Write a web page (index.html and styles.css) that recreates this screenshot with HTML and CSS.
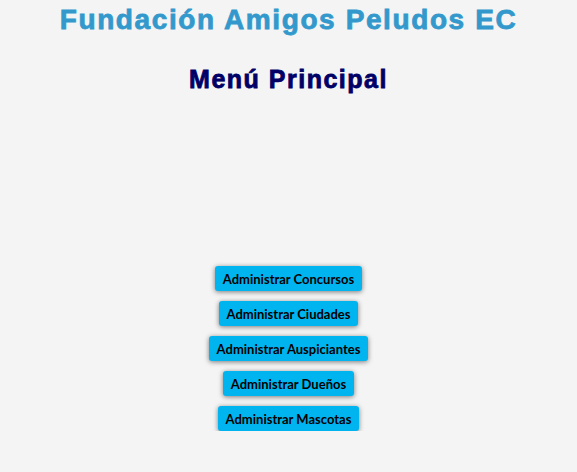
FILE: index.html
```html
<!DOCTYPE html>
<html lang="es">
<head>
    <meta charset="UTF-8">
    <title>Menú Principal</title>
    <link rel="stylesheet" href="styles.css">
</head>
<body>
    <h1 class="title">Fundación Amigos Peludos EC</h1>
    <h2 class="subtitle">Menú Principal</h2>

    <div class="menu">
        <button class="menu-btn">Administrar Concursos</button>
        <button class="menu-btn">Administrar Ciudades</button>
        <button class="menu-btn">Administrar Auspiciantes</button>
        <button class="menu-btn">Administrar Dueños</button>
        <button class="menu-btn">Administrar Mascotas</button>
    </div>
</body>
</html>
```

FILE: styles.css
```css
body {
    margin: 0;
    background-color: #f4f4f4;
    font-family: "Liberation Sans", Arial, sans-serif;
    text-align: center;
}

.title {
    margin: 4px 0 0;
    font-size: 28px;
    letter-spacing: 1.6px;
    color: #3399cc;
    -webkit-text-stroke: 0.8px #3399cc;
}

.subtitle {
    margin: 29px 0 0;
    font-size: 25px;
    letter-spacing: 1.5px;
    color: #000066;
    -webkit-text-stroke: 0.8px #000066;
}

.menu {
    display: flex;
    flex-direction: column;
    align-items: center;
    gap: 10px;
    padding-top: 172px;
}

.menu-btn {
    height: 25px;
    padding: 0 8px;
    font-family: Lato, sans-serif;
    font-size: 13px;
    font-weight: 700;
    color: #000;
    background-color: #00b4f0;
    border: none;
    border-radius: 3px;
    box-shadow: 0 1px 5px rgba(0, 0, 0, 0.5);
    cursor: pointer;
}
```
